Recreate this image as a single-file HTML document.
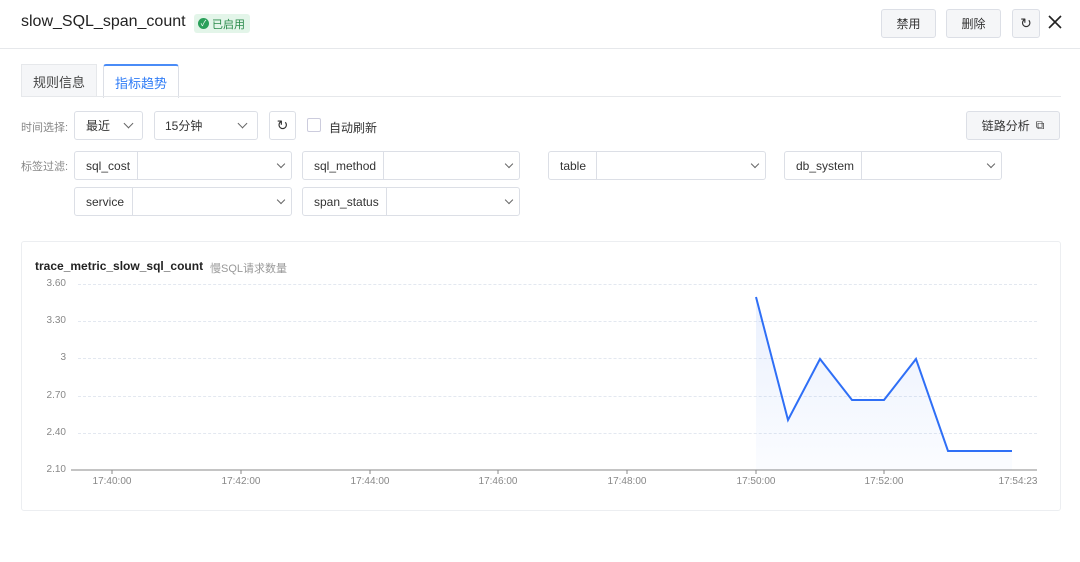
<!DOCTYPE html>
<html><head><meta charset="utf-8"><style>
*{box-sizing:border-box;margin:0;padding:0}
body{width:1080px;height:562px;background:#fff;font-family:"Liberation Sans","Noto Sans CJK SC",sans-serif;color:#333;position:relative;overflow:hidden}
.a{position:absolute}
.btn{position:absolute;border:1px solid #dcdfe6;border-radius:3px;background:#f5f6f8;font-size:12px;color:#333;display:flex;align-items:center;justify-content:center}
.sel{position:absolute;border:1px solid #dcdfe6;border-radius:3px;background:#fff;font-size:12px;color:#333;height:30px}
.lab{position:absolute;left:0;top:0;bottom:0;border-right:1px solid #dcdfe6;display:flex;align-items:center;padding-left:11px}
.t{position:absolute;top:0;bottom:0;display:flex;align-items:center}
.chev{position:absolute;top:9px;width:7px;height:7px;border-right:1.3px solid #666;border-bottom:1.3px solid #666;transform:rotate(45deg)}
.sm{width:6px;height:6px;top:9px;border-width:1.6px}
.gl{position:absolute;left:78px;width:959px;border-top:1px dashed #e3e8f0}
.yl{position:absolute;left:30px;width:36px;text-align:right;font-size:10px;color:#888}
.xl{position:absolute;top:476px;font-size:10px;color:#888;width:60px;text-align:center}
</style></head><body>
<div class="a" style="left:21px;top:13px;font-size:16px;color:#222">slow_SQL_span_count</div>
<div class="a" style="left:194px;top:14px;width:56px;height:19px;background:#e3f5e9;border-radius:3px;font-size:11px;color:#2a8a4a;display:flex;align-items:center;padding-left:4px"><span style="width:11px;height:11px;border-radius:50%;background:#2aa05a;color:#fff;font-size:8px;display:inline-flex;align-items:center;justify-content:center;margin-right:3px">✓</span>已启用</div>
<div class="btn" style="left:881px;top:9px;width:55px;height:29px">禁用</div>
<div class="btn" style="left:946px;top:9px;width:55px;height:29px">删除</div>
<div class="btn" style="left:1012px;top:9px;width:28px;height:29px;font-size:14px">↻</div>
<svg class="a" style="left:1048px;top:15px" width="14" height="14"><path d="M1 1L13 13M13 1L1 13" stroke="#222" stroke-width="1.6"/></svg>
<div class="a" style="left:0;top:48px;width:1080px;border-top:1px solid #e6e8eb"></div>
<div class="a" style="left:21px;top:64px;width:76px;height:33px;background:#f5f6f8;border:1px solid #e6e8eb;border-bottom:none;font-size:13px;color:#444;display:flex;align-items:center;justify-content:center">规则信息</div>
<div class="a" style="left:103px;top:64px;width:76px;height:34px;background:#fff;border:1px solid #dcdfe6;border-top:2px solid #4a8cf7;border-bottom:none;border-radius:3px 3px 0 0;font-size:13px;color:#2f7cf6;display:flex;align-items:center;justify-content:center">指标趋势</div>
<div class="a" style="left:21px;top:96px;width:1040px;border-top:1px solid #e6e8eb"></div>
<div class="a" style="left:21px;top:119px;font-size:11px;color:#888">时间选择:</div>
<div class="sel" style="left:74px;top:111px;width:69px;height:29px"><span class="t" style="left:11px">最近</span><div class="chev" style="left:50px;top:8px"></div></div>
<div class="sel" style="left:154px;top:111px;width:104px;height:29px"><span class="t" style="left:10px">15分钟</span><div class="chev" style="left:84px;top:8px"></div></div>
<div class="btn" style="left:269px;top:111px;width:27px;height:29px;background:#fff;font-size:14px">↻</div>
<div class="a" style="left:307px;top:118px;width:14px;height:14px;border:1px solid #ccd;border-radius:2px"></div>
<div class="a" style="left:329px;top:119px;font-size:12px">自动刷新</div>
<div class="btn" style="left:966px;top:111px;width:94px;height:29px;font-size:12px">链路分析 <span style="margin-left:6px;font-size:12px">⧉</span></div>
<div class="a" style="left:21px;top:158px;font-size:11px;color:#888">标签过滤:</div>
<div class="sel" style="left:74px;top:151px;width:218px;height:29px"><div class="lab" style="width:63px">sql_cost</div><div class="chev sm" style="left:203px"></div></div>
<div class="sel" style="left:302px;top:151px;width:218px;height:29px"><div class="lab" style="width:81px">sql_method</div><div class="chev sm" style="left:203px"></div></div>
<div class="sel" style="left:548px;top:151px;width:218px;height:29px"><div class="lab" style="width:48px">table</div><div class="chev sm" style="left:203px"></div></div>
<div class="sel" style="left:784px;top:151px;width:218px;height:29px"><div class="lab" style="width:77px">db_system</div><div class="chev sm" style="left:203px"></div></div>
<div class="sel" style="left:74px;top:187px;width:218px;height:29px"><div class="lab" style="width:58px">service</div><div class="chev sm" style="left:203px"></div></div>
<div class="sel" style="left:302px;top:187px;width:218px;height:29px"><div class="lab" style="width:84px">span_status</div><div class="chev sm" style="left:203px"></div></div>
<div class="a" style="left:21px;top:241px;width:1040px;height:270px;border:1px solid #eceef1;border-radius:3px"></div>
<div class="a" style="left:35px;top:259px;font-size:12px;color:#222;font-weight:bold">trace_metric_slow_sql_count</div>
<div class="a" style="left:210px;top:260px;font-size:11px;color:#999">慢SQL请求数量</div>
<div class="gl" style="top:284px"></div><div class="gl" style="top:321px"></div><div class="gl" style="top:358px"></div><div class="gl" style="top:396px"></div><div class="gl" style="top:433px"></div>
<div class="yl" style="top:278px">3.60</div><div class="yl" style="top:315px">3.30</div><div class="yl" style="top:352px">3</div><div class="yl" style="top:390px">2.70</div><div class="yl" style="top:427px">2.40</div><div class="yl" style="top:464px">2.10</div>
<svg class="a" style="left:0;top:0" width="1080" height="562">
<defs><linearGradient id="g" x1="0" y1="0" x2="0" y2="1"><stop offset="0" stop-color="#2f6ff6" stop-opacity=".1"/><stop offset="1" stop-color="#2f6ff6" stop-opacity=".02"/></linearGradient></defs>
<line x1="71" y1="470" x2="1037" y2="470" stroke="#888" stroke-width="1"/>
<g stroke="#888"><line x1="112" y1="470" x2="112" y2="474"/><line x1="241" y1="470" x2="241" y2="474"/><line x1="370" y1="470" x2="370" y2="474"/><line x1="498" y1="470" x2="498" y2="474"/><line x1="627" y1="470" x2="627" y2="474"/><line x1="756" y1="470" x2="756" y2="474"/><line x1="884" y1="470" x2="884" y2="474"/></g>
<path d="M756,297 L788,420 L820,359 L852,400 L884,400 L916,359 L948,451 L980,451 L1012,451 L1012,470 L756,470Z" fill="url(#g)"/>
<polyline points="756,297 788,420 820,359 852,400 884,400 916,359 948,451 980,451 1012,451" fill="none" stroke="#2f6ff6" stroke-width="2"/>
</svg>
<div class="xl" style="left:82px">17:40:00</div><div class="xl" style="left:211px">17:42:00</div><div class="xl" style="left:340px">17:44:00</div><div class="xl" style="left:468px">17:46:00</div><div class="xl" style="left:597px">17:48:00</div><div class="xl" style="left:726px">17:50:00</div><div class="xl" style="left:854px">17:52:00</div><div class="xl" style="left:988px">17:54:23</div>
</body></html>
